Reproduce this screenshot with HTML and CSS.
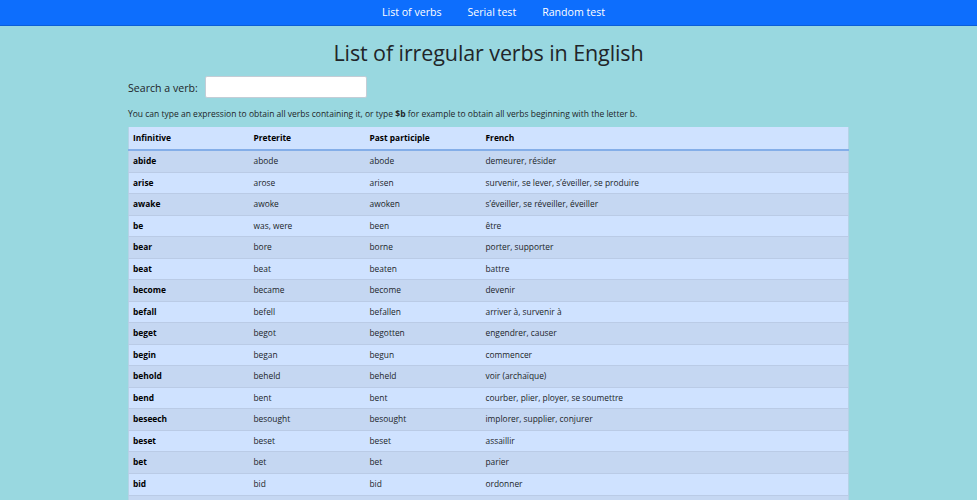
FILE: index.html
```html
<!DOCTYPE html>
<html lang="en">
<head>
<meta charset="utf-8">
<title>List of irregular verbs in English</title>
<link rel="stylesheet" href="styles.css">
</head>
<body>
<nav class="navbar">
  <a class="nav-link" href="#">List of verbs</a>
  <a class="nav-link" href="#">Serial test</a>
  <a class="nav-link" href="#">Random test</a>
</nav>
<main class="container">
  <h1 class="title">List of irregular verbs in English</h1>
  <div class="search">
    <label class="search-label" for="q">Search a verb:</label>
    <input class="search-input" id="q" type="text">
  </div>
  <p class="hint">You can type an expression to obtain all verbs containing it, or type <b>$b</b> for example to obtain all verbs beginning with the letter b.</p>
  <table class="verbs">
    <colgroup><col class="c1"><col class="c2"><col class="c3"><col class="c4"></colgroup>
    <thead>
      <tr><th>Infinitive</th><th>Preterite</th><th>Past participle</th><th>French</th></tr>
    </thead>
    <tbody>
      <tr><td class="inf">abide</td><td>abode</td><td>abode</td><td>demeurer, résider</td></tr>
      <tr><td class="inf">arise</td><td>arose</td><td>arisen</td><td>survenir, se lever, s’éveiller, se produire</td></tr>
      <tr><td class="inf">awake</td><td>awoke</td><td>awoken</td><td>s’éveiller, se réveiller, éveiller</td></tr>
      <tr><td class="inf">be</td><td>was, were</td><td>been</td><td>être</td></tr>
      <tr><td class="inf">bear</td><td>bore</td><td>borne</td><td>porter, supporter</td></tr>
      <tr><td class="inf">beat</td><td>beat</td><td>beaten</td><td>battre</td></tr>
      <tr><td class="inf">become</td><td>became</td><td>become</td><td>devenir</td></tr>
      <tr><td class="inf">befall</td><td>befell</td><td>befallen</td><td>arriver à, survenir à</td></tr>
      <tr><td class="inf">beget</td><td>begot</td><td>begotten</td><td>engendrer, causer</td></tr>
      <tr><td class="inf">begin</td><td>began</td><td>begun</td><td>commencer</td></tr>
      <tr><td class="inf">behold</td><td>beheld</td><td>beheld</td><td>voir (archaïque)</td></tr>
      <tr><td class="inf">bend</td><td>bent</td><td>bent</td><td>courber, plier, ployer, se soumettre</td></tr>
      <tr><td class="inf">beseech</td><td>besought</td><td>besought</td><td>implorer, supplier, conjurer</td></tr>
      <tr><td class="inf">beset</td><td>beset</td><td>beset</td><td>assaillir</td></tr>
      <tr><td class="inf">bet</td><td>bet</td><td>bet</td><td>parier</td></tr>
      <tr><td class="inf">bid</td><td>bid</td><td>bid</td><td>ordonner</td></tr>
      <tr><td class="inf">bind</td><td>bound</td><td>bound</td><td>lier</td></tr>
      <tr><td class="inf">bite</td><td>bit</td><td>bitten</td><td>mordre</td></tr>
    </tbody>
  </table>
</main>
</body>
</html>
```

FILE: styles.css
```css
* { box-sizing: border-box; }
html, body {
  margin: 0;
  padding: 0;
}
body {
  background: #99d8e0;
  color: #212529;
  font-family: "Open Sans", "Noto Sans", sans-serif;
}
.navbar {
  height: 26px;
  background: #0d6efd;
  border-bottom: 1px solid #0b5ed7;
  display: flex;
  justify-content: center;
  align-items: center;
  gap: 26px;
  padding-left: 10px;
}
.nav-link {
  color: #fff;
  text-decoration: none;
  font-size: 10.6px;
  line-height: 14px;
  padding-bottom: 1px;
}
.container {
  width: 721px;
  margin: 0 auto;
}
.title {
  margin: 0;
  padding-top: 14px;
  font-weight: 400;
  font-size: 21.5px;
  line-height: 26px;
  text-align: center;
  letter-spacing: -0.1px;
}
.search {
  display: flex;
  align-items: center;
  margin-top: 11px;
  gap: 6px;
}
.search-label {
  font-size: 10.6px;
}
.search-input {
  width: 162px;
  height: 22px;
  border: 1px solid #c4cdd6;
  border-radius: 2px;
  background: #fff;
  margin: 0 0 0 1px;
  padding: 0 4px;
  position: relative;
  top: -1px;
}
.hint {
  margin: 8px 0 7px;
  font-size: 8.5px;
  line-height: 13px;
}
.hint b { font-weight: 700; }
.verbs {
  width: 721px;
  border-collapse: collapse;
  table-layout: fixed;
  font-size: 8.4px;
  border-left: 1px solid #b4d3e6;
  border-right: 1px solid #b4d3e6;
}
.c1 { width: 121px; }
.c2 { width: 116px; }
.c3 { width: 116px; }
.verbs th, .verbs td {
  text-align: left;
  padding: 3px 4px;
  line-height: 14.53px;
  border-bottom: 1px solid #bacbe6;
  white-space: nowrap;
}
.verbs th {
  font-weight: 700;
  background: #cfe2ff;
  color: #000;
  padding-top: 4px;
  padding-bottom: 3.5px;
  border-bottom: 2px solid #84aee8;
}
.verbs tbody tr:nth-child(odd) td { background: #c5d7f2; }
.verbs tbody tr:nth-child(even) td { background: #cfe2ff; }
.verbs td.inf { font-weight: 700; color: #000; }
```
